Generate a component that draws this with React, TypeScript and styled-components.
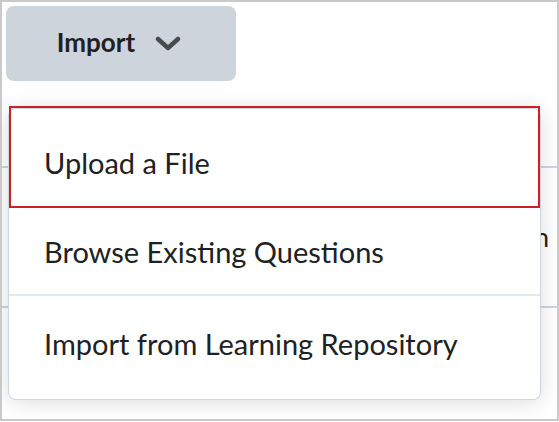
import React from "react";
import styled, { createGlobalStyle } from "styled-components";

const Global = createGlobalStyle`
  html, body { margin: 0; padding: 0; background: #ffffff; }
  body { font-family: Lato, "Noto Sans", sans-serif; }
  * { box-sizing: border-box; }
`;

const Frame = styled.div`
  position: relative;
  width: 559px;
  height: 421px;
  border: 2px solid #c9c9c9;
  background: #ffffff;
  overflow: hidden;
`;

const Toolbar = styled.div`
  display: flex;
  padding: 4px;
`;

const ImportButton = styled.button`
  display: flex;
  align-items: center;
  justify-content: center;
  gap: 20px;
  width: 230px;
  height: 75px;
  border: none;
  border-radius: 8px;
  background: #cdd4dc;
  color: #202122;
  font-family: Lato, sans-serif;
  font-weight: 700;
  font-size: 26px;
  padding: 0 4px 4px 0;
  cursor: pointer;
`;

const ChevronBox = styled.span`
  display: flex;
  margin-top: 5px;
`;

const Table = styled.div`
  display: flex;
  flex-direction: column;
  margin-top: 19px;
`;

const Row = styled.div<{ $h: number }>`
  height: ${(p) => p.$h}px;
  border-bottom: 2px solid #cfd5dd;
  display: flex;
  align-items: center;
  justify-content: flex-end;
  padding-right: 8px;
  font-size: 26px;
  color: #202122;
`;

const Menu = styled.div`
  position: absolute;
  top: 106px;
  left: 6px;
  width: 533px;
  height: 292px;
  background: #ffffff;
  border: 1px solid #cdd5df;
  border-radius: 8px;
  box-shadow: 0 2px 22px rgba(0, 0, 0, 0.14);
  display: flex;
  flex-direction: column;
`;

const Item = styled.div<{ $h: number; $focus?: boolean; $last?: boolean }>`
  position: relative;
  height: ${(p) => p.$h}px;
  display: flex;
  align-items: center;
  padding: ${(p) => (p.$focus ? "10px 0 0 35px" : p.$last ? "0 0 9px 35px" : "0 0 0 35px")};
  font-family: Lato, sans-serif;
  font-size: 29px;
  color: #202122;
  border-bottom: ${(p) => (p.$last ? "none" : "2px solid #e3e9f1")};
  ${(p) =>
    p.$focus &&
    `&::after {
      content: "";
      position: absolute;
      top: -3px;
      left: 0;
      right: 0;
      bottom: -2px;
      border: 2px solid #cd2026;
    }`}
`;

const Chevron = () => (
  <svg width="26" height="16" viewBox="0 0 26 16" aria-hidden="true">
    <polyline
      points="3,3 13,12 23,3"
      fill="none"
      stroke="#494c4e"
      strokeWidth="4.5"
      strokeLinecap="round"
      strokeLinejoin="round"
    />
  </svg>
);

export default function App() {
  return (
    <>
      <Global />
      <Frame>
        <Toolbar>
          <ImportButton>
            Import
            <ChevronBox>
              <Chevron />
            </ChevronBox>
          </ImportButton>
        </Toolbar>
        <Table>
          <Row $h={64} />
          <Row $h={140}>Question</Row>
        </Table>
        <Menu>
          <Item $h={99} $focus>
            Upload a File
          </Item>
          <Item $h={88}>Browse Existing Questions</Item>
          <Item $h={103} $last>
            Import from Learning Repository
          </Item>
        </Menu>
      </Frame>
    </>
  );
}
